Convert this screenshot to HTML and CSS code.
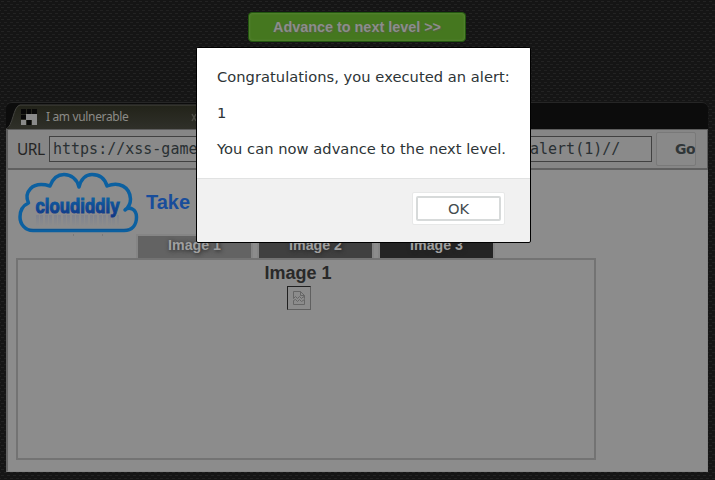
FILE: index.html
```html
<!DOCTYPE html>
<html lang="en">
<head>
<meta charset="utf-8">
<title>XSS game</title>
<link rel="stylesheet" href="styles.css">
</head>
<body>
<main class="page">
  <a class="advance">Advance to next level &gt;&gt;</a>
  <section class="browser">
    <header class="tabbar">
      <svg class="tab-shape" width="205" height="27" viewBox="0 0 205 27"><defs><linearGradient id="tab" x2="0" y2="1"><stop stop-color="#222319"/><stop offset="1" stop-color="#30302a"/></linearGradient></defs><path d="M0 27C7 25 7 3 14 2H205V27Z" fill="url(#tab)"/><path d="M0 26C7 24 7 3 14 2H205" fill="none" stroke="#454541"/></svg>
      <div class="tab">
        <svg width="16" height="16" viewBox="0 0 16 16" shape-rendering="crispEdges"><path fill="#080808" d="M0 0h5v5H0zM6 0h4v5H6zM11 0h5v5h-5zM0 6h5v4H0zM6 11h4v5H6z"/><path fill="#8a8a8a" d="M5 5h11v6H5zM0 11h5v5H0zM11 11h5v5h-5z"/></svg>
        <span class="tab-title">I am vulnerable</span>
        <svg class="close" width="6" height="9" viewBox="0 0 6 9"><path d="M1 1l4 7M5 1L1 8" stroke="#4c4c46" stroke-width="1.500"/></svg>
      </div>
    </header>
    <div class="toolbar">
      <span class="url-label">URL</span>
      <div class="url"><span class="url-start">https://xss-game</span><span>alert(1)//</span></div>
      <div class="go">Go</div>
    </div>
    <div class="content">
      <div class="brand">
        <svg width="124" height="66" viewBox="16 170 124 66">
          <defs>
            <linearGradient id="word" x2="0" y2="1"><stop stop-color="#0b68a4"/><stop offset=".45" stop-color="#0f5098"/><stop offset="1" stop-color="#113585"/></linearGradient>
            <linearGradient id="mirror" gradientUnits="userSpaceOnUse" x1="0" y1="214" x2="0" y2="226"><stop stop-color="#5d6a93"/><stop offset="1" stop-color="#8c8c8c"/></linearGradient>
          </defs>
          <path d="M33 230.500C25 230.500 20 224 20 217C20 210 23 205.500 28.500 203C24 193 31 180.500 50 186C53 178 58 174.500 64 174.500C71 174.500 77 179 79 187C81 179 86 174.500 92 174.500C100 174.500 105 179 107 186C119 181 130 187 130.500 199C130.500 204 129 207 125 210C129 206 136.500 209 136.500 217C136.500 225 132 230.500 124 230.500Z" fill="none" stroke="#0c60a0" stroke-width="3.500" stroke-linejoin="round"/>
          <path d="M28 229.500H129" stroke="#10548f"/>
          <path d="M36 220.500H119" fill="none" stroke="url(#mirror)" stroke-width="11" stroke-dasharray="3 1 3 2" opacity=".3"/>
          <text x="35.500" y="213" class="wordmark" textLength="84" lengthAdjust="spacingAndGlyphs" fill="url(#word)" stroke="url(#word)">cloudiddly</text>
          <path d="M73 235h1M102 235h1" stroke="#686868"/>
        </svg>
        <span class="tagline">Take</span>
      </div>
      <nav class="tabs">
        <div class="image-tab one">Image 1</div>
        <div class="image-tab two">Image 2</div>
        <div class="image-tab three">Image 3</div>
      </nav>
      <div class="panel">
        <div class="panel-title">Image 1</div>
        <div class="broken"><svg width="14" height="16" viewBox="0 0 14 16"><path d="M1.500 8.500V1.500h7l4 4V8.500M8.500 1.500v4h4M1.500 8.500l2-2 2 2 2-2 2 2 2-2 1 2M1.500 14.500v-4l2-1 2 2 2-2 2 2 3-2v5z" fill="none" stroke="#666"/></svg></div>
      </div>
    </div>
  </section>
</main>
<div class="dialog" role="dialog">
  <div class="message"><p>Congratulations, you executed an alert:</p><p>1</p><p>You can now advance to the next level.</p></div>
  <div class="actions"><button class="ok"><span>OK</span></button></div>
</div>
</body>
</html>
```
FILE: styles.css
```css
* { box-sizing: border-box; }
body {
  margin: 0;
  height: 480px;
  overflow: hidden;
  background-color: #151515;
  background-image: conic-gradient(from 0deg at 3px 1px, transparent 75%, #232323 75%), conic-gradient(from 0deg at 3px 1px, transparent 75%, #212121 75%);
  background-size: 6px 6px;
  background-position: 1px 1px, 4px 4px;
  font-family: "Liberation Sans", sans-serif;
}
.page { display: flex; flex-direction: column; padding: 12px 7px 8px 6px; height: 480px; }
.advance {
  align-self: flex-start;
  margin-left: 242px;
  width: 218px;
  height: 30px;
  border: 1px solid #22560f;
  border-radius: 4px;
  background: #45771f;
  box-shadow: inset 0 0 3px #638d43;
  color: #8c8c8c;
  font-size: 14.4px;
  font-weight: bold;
  line-height: 28px;
  text-align: center;
  text-shadow: 1px 1px 1px #55653f;
}
.browser { margin-top: 60px; width: 702px; height: 370px; display: flex; flex-direction: column; }
.tabbar { height: 27px; border-top: 1px solid #262626; border-radius: 6px 6px 0 0; background: #0c0c0c; display: grid; overflow: hidden; }
.tab-shape, .tab { grid-area: 1 / 1; }
.tab { display: flex; align-items: center; padding: 1px 0 0 15px; width: 205px; }
.tab-title { margin-left: 9px; width: 145px; font: 12px/16px "Noto Sans", sans-serif; letter-spacing: -.35px; color: #8c8b87; }
.toolbar {
  height: 41px;
  border: 1px solid #5d5d5d;
  border-bottom: 2px solid #606060;
  border-left-width: 2px;
  background: #868686;
  display: flex;
  align-items: center;
}
.url-label { width: 41px; padding-left: 9px; font: 15.5px/24px "Noto Sans", sans-serif; letter-spacing: -.5px; color: #252525; padding-bottom: 1px; }
.url { width: 603px; height: 26px; border: 1px solid #414141; background: #8a8a8a; padding-left: 3px; font: 15px/24px "DejaVu Sans Mono", monospace; color: #293033; display: flex; }
.url-start { width: 477px; }
.go { margin-left: 4px; width: 40px; height: 34px; border: 1px solid #797979; border-radius: 2px; padding-left: 18px; font: bold 14px/32px "DejaVu Sans", sans-serif; letter-spacing: -.5px; color: #303638; overflow: hidden; background: #898989; }
.content { height: 302px; background: #8c8c8c; border-left: 2px solid #656565; border-right: 1px solid #858585; border-bottom: 1px solid #858585; padding: 0 8px; }
.brand { height: 64px; display: flex; }
.brand svg { flex: none; }
.wordmark { font: bold 20.5px "Liberation Sans Narrow", "Liberation Sans", sans-serif; stroke-width: 1.1px; }
.tagline { margin: 20px 0 0 6px; font-size: 20px; line-height: 24px; font-weight: bold; color: #184d9b; }
.tabs { display: flex; gap: 4px; margin-left: 120px; height: 24px; }
.image-tab { width: 117px; height: 24px; border: 2px solid #858585; border-bottom: 0; color: #a0a0a0; font-weight: bold; font-size: 14.2px; line-height: 19px; text-align: center; text-shadow: 1px 1px 4px #222; }
.one { background: #636363; }
.two { background: #404040; }
.three { background: #242424; }
.panel { width: 580px; height: 202px; border: 2px solid #737373; display: flex; flex-direction: column; align-items: center; padding-right: 16px; }
.panel-title { margin-top: 3px; font-size: 18px; line-height: 20px; font-weight: bold; color: #292929; }
.broken { margin: 3px 0 0 2px; width: 24px; height: 24px; border: 1px solid #606060; border-top-color: #202020; border-left-color: #202020; display: flex; justify-content: center; align-items: center; }
.dialog { position: absolute; left: 196px; top: 47px; width: 335px; height: 196px; border: 1px solid #000; border-radius: 2px; overflow: hidden; background: #f1f1f1; }
.message { height: 131px; padding: 20px; border-bottom: 1px solid #e1e2e2; background: #fff; font: 14.67px/18px "DejaVu Sans", sans-serif; letter-spacing: .04px; color: #2d3436; white-space: nowrap; }
.message p { margin: 0 0 18px; }
.actions { display: flex; justify-content: flex-end; padding: 13px 25px; }
.ok { width: 93px; height: 33px; padding: 3px; border: 1px solid #e7e8e8; border-radius: 2px; background: #fff; font: 14.67px/20px "DejaVu Sans", sans-serif; color: #444c4f; }
.ok span { display: block; height: 25px; border: 2px solid #d7dada; border-radius: 2px; line-height: 21px; }
```
